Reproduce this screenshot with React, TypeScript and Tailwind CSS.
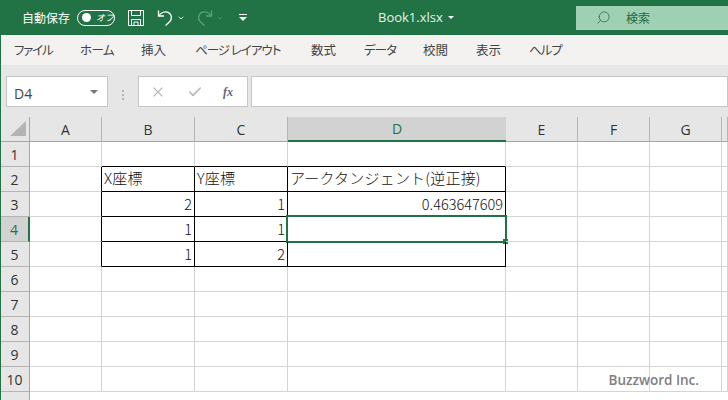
import { Check, ChevronDown, Search, X } from 'lucide-react'

const jp = '[font-family:"Noto_Sans_CJK_JP","Liberation_Sans",sans-serif]'

const tabs = [
  { label: 'ファイル', w: 'w-[66px] tracking-[-1.2px]' },
  { label: 'ホーム', w: 'w-[61px] tracking-[-0.6px]' },
  { label: '挿入', w: 'w-[54px]' },
  { label: 'ページ レイアウト', w: 'w-[116px] tracking-[-1px]' },
  { label: '数式', w: 'w-[53px]' },
  { label: 'データ', w: 'w-[59px] tracking-[-1px]' },
  { label: '校閲', w: 'w-[53px]' },
  { label: '表示', w: 'w-[53px]' },
  { label: 'ヘルプ', w: 'w-[40px] tracking-[-1px]' },
]

const columns = [
  { label: 'A', w: 'w-[72px]' },
  { label: 'B', w: 'w-[93px]' },
  { label: 'C', w: 'w-[93px]' },
  { label: 'D', w: 'w-[218px]' },
  { label: 'E', w: 'w-[72px]' },
  { label: 'F', w: 'w-[72px]' },
  { label: 'G', w: 'w-[72px]' },
  { label: '', w: 'w-[6px]' },
]

const rows = [1, 2, 3, 4, 5, 6, 7, 8, 9, 10]

const cells: Record<string, { text: string; right?: boolean }> = {
  B2: { text: 'X座標' },
  C2: { text: 'Y座標' },
  D2: { text: 'アークタンジェント(逆正接)' },
  B3: { text: '2', right: true },
  C3: { text: '1', right: true },
  D3: { text: '0.463647609', right: true },
  B4: { text: '1', right: true },
  C4: { text: '1', right: true },
  B5: { text: '1', right: true },
  C5: { text: '2', right: true },
}

function SaveIcon() {
  return (
    <svg width="16" height="16" viewBox="0 0 16 16" fill="none" stroke="#fff" strokeWidth="1">
      <path d="M.5.5h15v15H.5z" />
      <path d="M3.5.5v5h9v-5M3.5 15.5v-6h9v6M6 15.5v-3.5h4v3.5" />
    </svg>
  )
}

function Undo({ dim }: { dim?: boolean }) {
  return (
    <svg
      width="17"
      height="17"
      viewBox="0 0 17 17"
      fill="none"
      stroke={dim ? '#5f9f7d' : '#fff'}
      strokeWidth="1.3"
      className={dim ? '-scale-x-100' : ''}
    >
      <path d="M1.5 1.5v5.5h5.5" />
      <path d="M1.8 6.8C4 3.4 8.4 1.8 11.6 3.6c3.4 2 3.6 6.2 1.2 9L8.6 16.4" />
    </svg>
  )
}

function Toggle() {
  return (
    <div className="flex h-[16px] w-[38px] items-center rounded-full border border-white pl-[4px]">
      <div className="h-[9px] w-[9px] shrink-0 rounded-full bg-white" />
      <span className={`ml-[5px] text-[9px] leading-none whitespace-nowrap text-white italic ${jp}`}>オフ</span>
    </div>
  )
}

function TitleBar() {
  return (
    <div className="flex h-[35px] items-center bg-[#217346] pl-[22px] text-white">
      <span className={`w-[55px] text-[12px] whitespace-nowrap ${jp}`}>自動保存</span>
      <Toggle />
      <div className="ml-[13px]">
        <SaveIcon />
      </div>
      <div className="ml-[13px]">
        <Undo />
      </div>
      <ChevronDown size={8} strokeWidth={2.5} className="ml-[3px]" />
      <div className="ml-[11px]">
        <Undo dim />
      </div>
      <ChevronDown size={8} strokeWidth={2} className="ml-[3px] text-[#5f9f7d]" />
      <div className="ml-[15px] flex w-[8px] flex-col items-center gap-[2px]">
        <div className="h-px w-[8px] bg-white" />
        <div className="h-0 w-0 border-x-4 border-t-4 border-x-transparent border-t-white" />
      </div>
      <span className="ml-[131px] w-[70px] font-['Open_Sans'] text-[13px] whitespace-nowrap text-[#e6f1ea]">
        Book1.xlsx
      </span>
      <div className="h-0 w-0 border-x-[3px] border-t-[3px] border-x-transparent border-t-white" />
      <div className="ml-[122px] flex h-[24px] flex-1 items-center bg-[#a0d0b4] pl-[20px] text-[#1f6b41]">
        <Search size={15} strokeWidth={1.2} className="-scale-x-100" />
        <span className={`ml-[15px] text-[12px] ${jp}`}>検索</span>
      </div>
    </div>
  )
}

function Ribbon() {
  return (
    <div className="flex h-[30px] items-center bg-[#f3f2f1] pl-[14px] shadow-[0_3px_4px_rgba(0,0,0,0.12)]">
      {tabs.map(tab => (
        <span
          key={tab.label}
          className={`${tab.w} shrink-0 text-[12.5px] whitespace-nowrap text-[#444] [font-feature-settings:"palt"] ${jp}`}
        >
          {tab.label}
        </span>
      ))}
    </div>
  )
}

function FormulaBar() {
  return (
    <div className="flex h-[52px] items-start bg-[#e6e6e6] pt-[11px] pl-[6px]">
      <div className="flex h-[31px] w-[102px] items-center justify-between border border-[#c6c6c6] bg-white pr-[9px] pl-[7px]">
        <span className="pt-[3px] font-['Open_Sans'] text-[14px] text-[#444]">D4</span>
        <div className="h-0 w-0 border-x-[4px] border-t-[4px] border-x-transparent border-t-[#777]" />
      </div>
      <div className="ml-[14px] flex w-[3px] flex-col gap-[2px] self-center pb-[3px]">
        <div className="h-[2px] w-[2px] bg-[#b4b4b4]" />
        <div className="h-[2px] w-[2px] bg-[#b4b4b4]" />
        <div className="h-[2px] w-[2px] bg-[#b4b4b4]" />
      </div>
      <div className="ml-[13px] flex h-[31px] w-[110px] items-center border border-[#c6c6c6] bg-white pl-[11px]">
        <X size={16} strokeWidth={1.6} className="text-[#b8b8b8]" />
        <Check size={16} strokeWidth={2.4} className="ml-[21px] text-[#b8b8b8]" />
        <span className="ml-[20px] font-['Liberation_Serif'] text-[12px] font-bold text-[#666] italic">fx</span>
      </div>
      <div className="ml-[3px] h-[31px] flex-1 border border-[#c6c6c6] bg-white" />
    </div>
  )
}

function ColumnHeaders() {
  return (
    <div className="flex h-[25px]">
      <div className="flex h-full w-[30px] shrink-0 items-end border-r border-b border-[#a6a6a6] bg-[#e6e6e6] pb-[5px] pl-[10px]">
        <svg width="16" height="15" viewBox="0 0 16 15">
          <path d="M16 0v15H0z" fill="#b4b4b4" />
        </svg>
      </div>
      {columns.map(col =>
        col.label === 'D' ? (
          <div
            key={col.label}
            className={`${col.w} flex shrink-0 items-center justify-center border-b-2 border-[#217346] bg-[#d2d2d2] font-['Open_Sans'] text-[14px] text-[#217346]`}
          >
            {col.label}
          </div>
        ) : (
          <div
            key={col.label}
            className={`${col.w} flex shrink-0 items-center justify-center border-r border-b border-r-[#b4b4b4] border-b-[#a6a6a6] bg-[#e6e6e6] font-['Open_Sans'] text-[14px] text-[#333]`}
          >
            {col.label}
          </div>
        ),
      )}
    </div>
  )
}

// black outline of the B2:D5 table sits on the shared cell edges
function edgeClass(col: string, row: number) {
  const inRows = row >= 2 && row <= 5
  const rightBlack = inRows && ['A', 'B', 'C', 'D'].includes(col)
  const bottomBlack = row >= 1 && row <= 5 && ['B', 'C', 'D'].includes(col)
  return `${rightBlack ? 'border-r-black' : 'border-r-[#d4d4d4]'} ${bottomBlack ? 'border-b-black' : 'border-b-[#d4d4d4]'}`
}

function Row({ row }: { row: number }) {
  const active = row === 4
  return (
    <div className="flex h-[25px]">
      {active ? (
        <div className="flex w-[30px] shrink-0 items-center justify-center border-r-2 border-b border-r-[#217346] border-b-[#b4b4b4] bg-[#d2d2d2] font-['Open_Sans'] text-[14px] text-[#217346]">
          {row}
        </div>
      ) : (
        <div className="flex w-[30px] shrink-0 items-center justify-center border-r border-b border-r-[#a6a6a6] border-b-[#b4b4b4] bg-[#e6e6e6] font-['Open_Sans'] text-[14px] text-[#333]">
          {row}
        </div>
      )}
      {columns.map(col => {
        const cell = cells[`${col.label}${row}`]
        return (
          <div
            key={col.label}
            className={`${col.w} relative flex shrink-0 items-center border-r border-b px-[2px] font-light whitespace-nowrap text-[#111] ${jp} ${cell?.right ? 'justify-end text-[14.5px]' : 'pb-[2px] text-[15px] tracking-[0.2px]'} ${edgeClass(col.label, row)}`}
          >
            {cell?.text}
            {active && col.label === 'D' && (
              <div className="absolute -top-[2px] -right-[2px] -bottom-[2px] -left-[2px] border-2 border-[#217346]">
                <div className="absolute -right-[3px] -bottom-[3px] h-[5px] w-[5px] bg-[#217346]" />
              </div>
            )}
          </div>
        )
      })}
    </div>
  )
}

export default function App() {
  return (
    <div className="relative h-[400px] w-[728px] overflow-hidden bg-white">
      <TitleBar />
      <Ribbon />
      <FormulaBar />
      <ColumnHeaders />
      {rows.map(row => (
        <Row key={row} row={row} />
      ))}
      <div className="flex h-[9px]">
        <div className="w-[30px] border-r border-[#a6a6a6] bg-[#e6e6e6]" />
      </div>
      <span className="absolute right-[29px] bottom-[10px] font-['Open_Sans'] text-[13.5px] font-semibold text-[#808080]">
        Buzzword Inc.
      </span>
      <div className="absolute top-[35px] bottom-0 left-0 w-px bg-[#217346]" />
    </div>
  )
}
